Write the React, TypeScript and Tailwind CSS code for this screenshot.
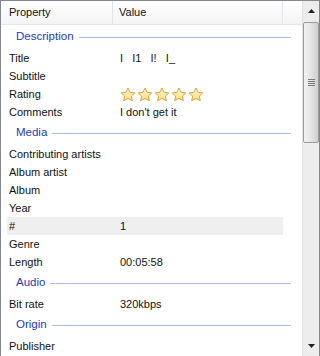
import React from "react";

type Row = { label: string; value?: React.ReactNode; selected?: boolean };
type Group = { title: string; rows: Row[] };

function Star() {
  return (
    <svg width="16" height="15" viewBox="0 0 16 15">
      <defs>
        <linearGradient id="starfill" x1="0" y1="0" x2="0" y2="1">
          <stop offset="0" stopColor="#fffbe0" />
          <stop offset="1" stopColor="#f8dc78" />
        </linearGradient>
      </defs>
      <path
        d="M8 1l2.1 4.3 4.7.6-3.4 3.2.9 4.6L8 11.5l-4.3 2.2.9-4.6L1.2 5.9l4.7-.6z"
        fill="url(#starfill)"
        stroke="#d9a43c"
        strokeWidth="1"
        strokeLinejoin="round"
      />
    </svg>
  );
}

function Stars() {
  return (
    <div className="flex gap-[1px]">
      {[0, 1, 2, 3, 4].map((i) => (
        <Star key={i} />
      ))}
    </div>
  );
}

const groups: Group[] = [
  {
    title: "Description",
    rows: [
      { label: "Title", value: <span className="whitespace-pre">{"I   I1   I!   I_"}</span> },
      { label: "Subtitle" },
      { label: "Rating", value: <Stars /> },
      { label: "Comments", value: "I don't get it" },
    ],
  },
  {
    title: "Media",
    rows: [
      { label: "Contributing artists" },
      { label: "Album artist" },
      { label: "Album" },
      { label: "Year" },
      { label: "#", value: "1", selected: true },
      { label: "Genre" },
      { label: "Length", value: "00:05:58" },
    ],
  },
  {
    title: "Audio",
    rows: [{ label: "Bit rate", value: "320kbps" }],
  },
  {
    title: "Origin",
    rows: [{ label: "Publisher" }],
  },
];

function ScrollBar() {
  return (
    <div className="w-[17px] flex flex-col bg-[#ededed] border-l border-[#e3e3e3]">
      <div className="h-[20px] flex items-center justify-center">
        <svg width="7" height="4" viewBox="0 0 7 4">
          <path d="M3.5 0L7 4H0z" fill="#222" />
        </svg>
      </div>
      <div className="mt-[1px] h-[121px] rounded-[2px] border border-[#9a9a9a] bg-gradient-to-r from-[#f2f2f2] via-[#e4e4e4] to-[#cfcfcf] flex items-center justify-center">
        <div className="flex flex-col gap-[1px]">
          <div className="w-[7px] h-[1px] bg-[#7a7a7a]" />
          <div className="w-[7px] h-[1px] bg-[#7a7a7a]" />
          <div className="w-[7px] h-[1px] bg-[#7a7a7a]" />
          <div className="w-[7px] h-[1px] bg-[#7a7a7a]" />
        </div>
      </div>
      <div className="flex-1" />
      <div className="h-[20px] flex items-center justify-center">
        <svg width="7" height="4" viewBox="0 0 7 4">
          <path d="M0 0H7L3.5 4z" fill="#222" />
        </svg>
      </div>
    </div>
  );
}

export default function App() {
  return (
    <div className="w-[320px] h-[356px] bg-white border-l border-t border-r border-[#828790] flex overflow-hidden text-[11px] text-[#111] font-['Liberation_Sans',Arial,sans-serif]">
      <div className="flex-1 flex flex-col min-w-0">
        {/* Header */}
        <div className="h-[24px] flex border-b border-[#e5e7ea] bg-gradient-to-b from-white to-[#f3f4f6]">
          <div className="w-[112px] pl-[8px] flex items-center border-r border-[#e1e4e8]">Property</div>
          <div className="w-[170px] pl-[6px] flex items-center border-r border-[#e1e4e8]">Value</div>
          <div className="flex-1" />
        </div>

        {groups.map((g) => (
          <div key={g.title} className="flex flex-col">
            <div className="h-[24px] flex items-center pl-[15px] pr-[11px] gap-[5px]">
              <span className="text-[#1f3cb4] text-[11.5px]">{g.title}</span>
              <div className="flex-1 h-px bg-[#aebfe4]" />
            </div>
            {g.rows.map((r) => (
              <div
                key={r.label}
                className={`h-[18px] ml-[6px] w-[276px] flex items-center ${r.selected ? "bg-[#efefef]" : ""}`}
              >
                <div className="w-[113px] pl-[2px] whitespace-nowrap">{r.label}</div>
                <div className="flex-1 flex items-center">{r.value}</div>
              </div>
            ))}
          </div>
        ))}
      </div>
      <ScrollBar />
    </div>
  );
}
